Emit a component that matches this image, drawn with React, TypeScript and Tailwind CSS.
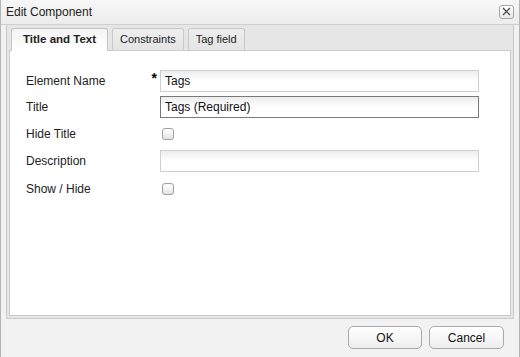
import React from 'react';

const font = { fontFamily: '"Liberation Sans", Arial, sans-serif' };

function Field({ value, focused }: { value?: string; focused?: boolean }) {
  return (
    <div
      className={`h-[22px] w-[319px] flex items-center px-[4px] text-[12px] text-[#111] bg-gradient-to-b from-[#ececec] via-white to-white border ${
        focused ? 'border-[#7a7a7a]' : 'border-[#cfcfcf]'
      }`}
    >
      {value}
    </div>
  );
}

function Check() {
  return (
    <div className="ml-[2px] w-[12px] h-[12px] rounded-[3px] border border-[#a0a0a0] bg-gradient-to-b from-white to-[#e4e4e4]" />
  );
}

function Row({ label, req, h, children }: { label: string; req?: boolean; h: string; children: React.ReactNode }) {
  return (
    <div className={`flex items-center ${h}`}>
      <div className="w-[135px] flex items-center justify-between pl-[1px] pr-[3px] text-[12px] text-[#222]">
        <span>{label}</span>
        {req && <span className="text-[14px] font-bold leading-none -mt-[7px] text-black">*</span>}
      </div>
      {children}
    </div>
  );
}

export default function App() {
  return (
    <div style={font} className="w-[520px] h-[357px] flex flex-col bg-[#f2f2f2] border-l border-r border-[#b4b4b4]">
      <div className="h-[25px] shrink-0 flex items-center justify-between pl-[5px] pr-[5px] border-b border-[#d0d0d0] bg-gradient-to-b from-[#f8f8f8] to-[#ececec]">
        <span className="text-[12px] text-[#222]">Edit Component</span>
        <button className="w-[15px] h-[14px] -mt-[1px] flex items-center justify-center rounded-[3px] border border-[#a8a8a8] bg-gradient-to-b from-white to-[#e8e8e8]">
          <svg width="9" height="9" viewBox="0 0 9 9">
            <path d="M1 1L8 8M8 1L1 8" stroke="#444" strokeWidth="1.2" />
          </svg>
        </button>
      </div>

      <div className="px-[5px] shrink-0">
        <div className="h-[294px] border border-t-0 border-[#cbcbcb] bg-[#e6e6e6] px-[2px] pb-[2px] flex flex-col">
          <div className="h-[25px] flex items-end gap-[4px] pl-[2px]">
            <div className="h-[23px] -mb-[1px] relative z-10 px-[11px] flex items-center rounded-t-[3px] border border-b-0 border-[#c4c4c4] bg-gradient-to-b from-[#f4f4f4] to-white text-[11.5px] font-bold text-[#222]">
              Title and Text
            </div>
            <div className="h-[22px] px-[7px] flex items-center rounded-t-[3px] border border-b-0 border-[#c8c8c8] bg-gradient-to-b from-[#eeeeee] to-[#e4e4e4] text-[11px] text-[#222]">
              Constraints
            </div>
            <div className="h-[22px] px-[7px] flex items-center rounded-t-[3px] border border-b-0 border-[#c8c8c8] bg-gradient-to-b from-[#eeeeee] to-[#e4e4e4] text-[11px] text-[#222]">
              Tag field
            </div>
          </div>
          <div className="flex-1 bg-white border border-[#cbcbcb] pl-[15px] pt-[19px] flex flex-col">
            <Row label="Element Name" req h="h-[22px]">
              <Field value="Tags" />
            </Row>
            <div className="h-[4px]" />
            <Row label="Title" h="h-[22px]">
              <Field value="Tags (Required)" focused />
            </Row>
            <Row label="Hide Title" h="h-[32px]">
              <Check />
            </Row>
            <Row label="Description" h="h-[22px]">
              <Field />
            </Row>
            <Row label="Show / Hide" h="h-[34px]">
              <Check />
            </Row>
          </div>
        </div>
      </div>

      <div className="flex-1 flex items-center justify-end gap-[7px] pr-[15px] pb-[1px]">
        <button className="w-[74px] h-[23px] rounded-[5px] border border-[#a9a9a9] bg-gradient-to-b from-white to-[#eeeeee] text-[12px] text-[#111]">
          OK
        </button>
        <button className="w-[75px] h-[23px] rounded-[5px] border border-[#a9a9a9] bg-gradient-to-b from-white to-[#eeeeee] text-[12px] text-[#111]">
          Cancel
        </button>
      </div>
    </div>
  );
}
